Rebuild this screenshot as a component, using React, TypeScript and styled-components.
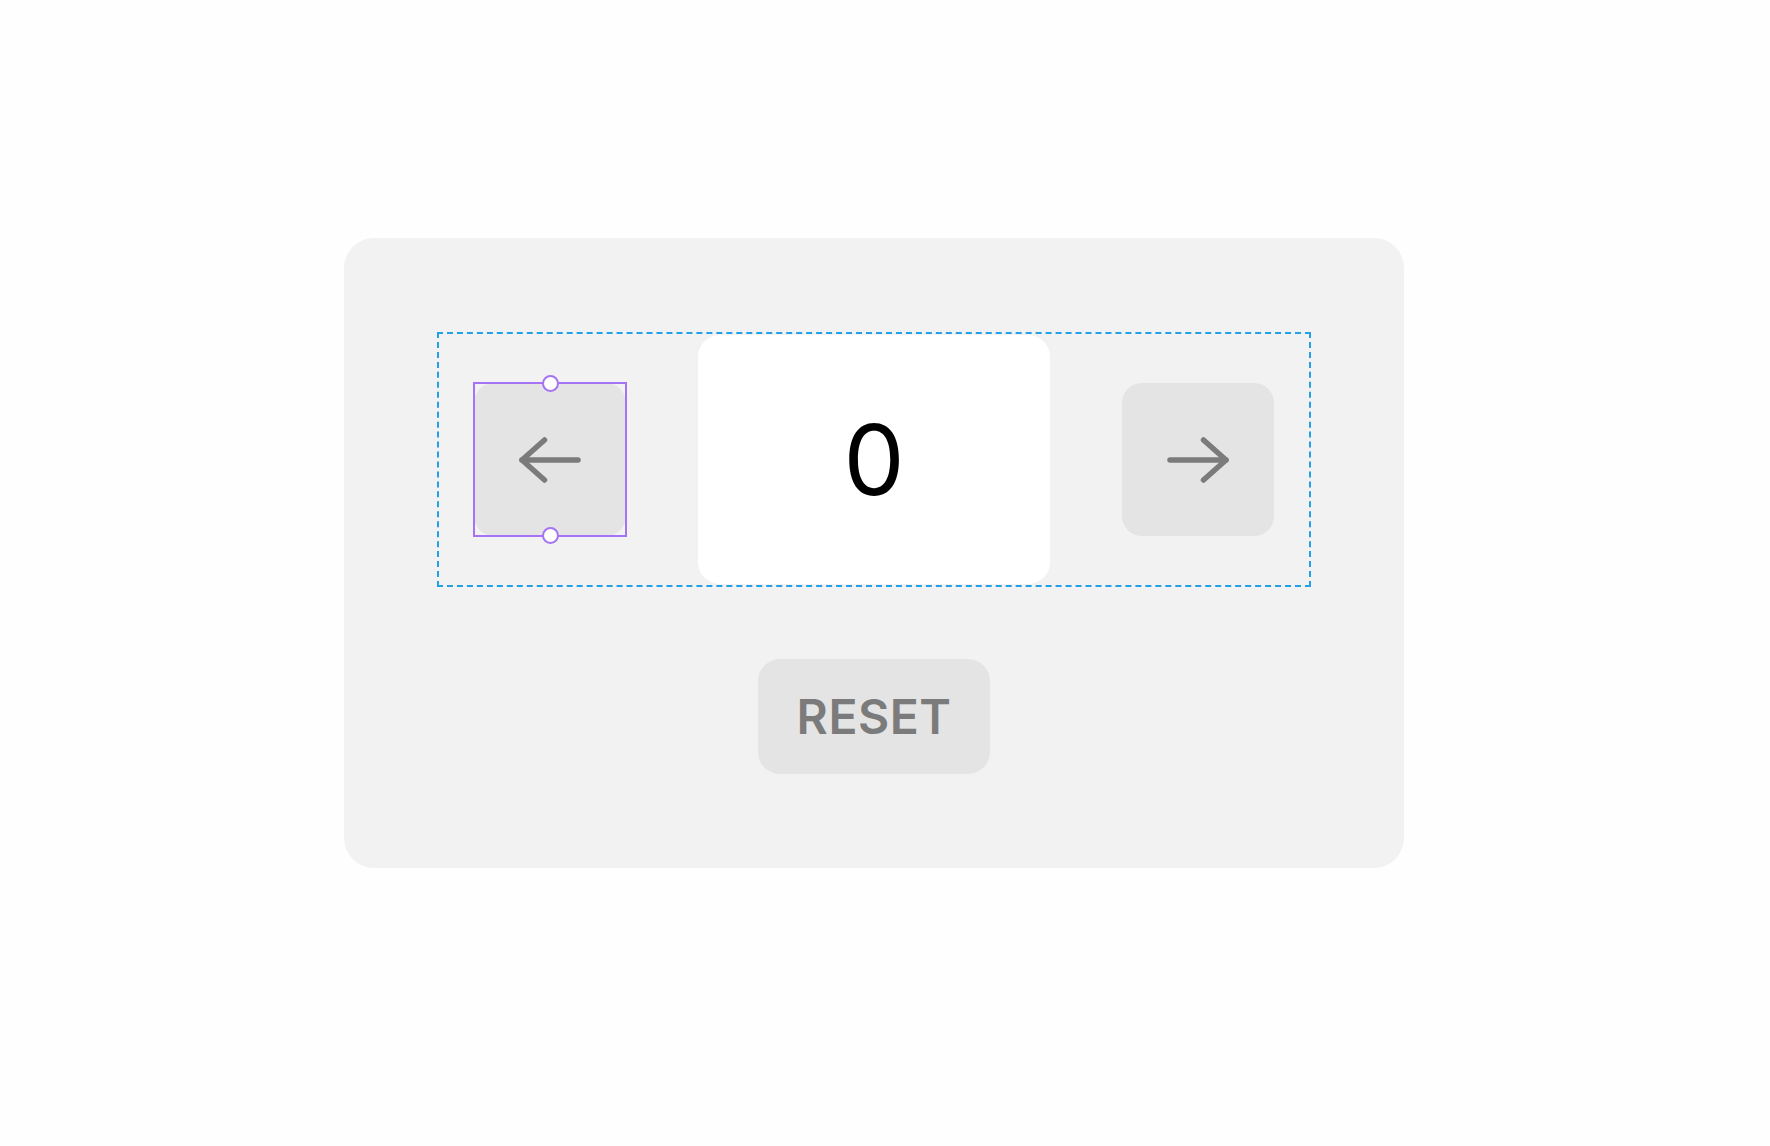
import React, { useState } from "react";
import styled, { createGlobalStyle } from "styled-components";

const GlobalStyle = createGlobalStyle`
  html, body {
    margin: 0;
    padding: 0;
    background: #fefefe;
    font-family: Inter, "Noto Sans", sans-serif;
  }
`;

const Page = styled.div`
  padding: 238px 0 0 344px;
  min-height: 100vh;
  box-sizing: border-box;
`;

const Card = styled.div`
  width: 1060px;
  height: 630px;
  box-sizing: border-box;
  padding: 94px 93px;
  background: #f2f2f2;
  border-radius: 30px;
  display: flex;
  flex-direction: column;
  align-items: center;
  gap: 72px;
`;

const Stepper = styled.div`
  display: flex;
  align-items: center;
  gap: 72px;
  height: 255px;
  box-sizing: border-box;
  padding: 0 35px;
  border: 2px dashed #23a0e6;
`;

const Selected = styled.div`
  position: relative;
  display: flex;
`;

const Outline = styled.div`
  position: absolute;
  inset: -1px;
  border: 2px solid #a474f2;
  pointer-events: none;
`;

const Handle = styled.span<{ $edge: "top" | "bottom" }>`
  position: absolute;
  left: 50%;
  ${(p) => (p.$edge === "top" ? "top: -9px;" : "bottom: -9px;")}
  width: 13px;
  height: 13px;
  margin-left: -8.5px;
  border-radius: 50%;
  background: #fff;
  border: 2px solid #a474f2;
`;

const ArrowButton = styled.button`
  width: 152px;
  height: 153px;
  border: none;
  border-radius: 20px;
  background: #e4e4e4;
  display: flex;
  align-items: center;
  justify-content: center;
  padding: 0;
  cursor: pointer;
  color: #7b7b7b;
`;

const Display = styled.div`
  width: 352px;
  height: 249px;
  background: #fff;
  border-radius: 22px;
  display: flex;
  align-items: center;
  justify-content: center;
  font-size: 97px;
  font-weight: 400;
  color: #000;
  line-height: 1;
`;

const ResetButton = styled.button`
  width: 232px;
  height: 115px;
  border: none;
  border-radius: 22px;
  background: #e4e4e4;
  color: #7b7b7b;
  font-family: Inter, "Noto Sans", sans-serif;
  font-size: 48px;
  font-weight: 600;
  letter-spacing: 0.5px;
  cursor: pointer;
  padding: 0;
`;

const Arrow: React.FC<{ dir: "left" | "right" }> = ({ dir }) => (
  <svg
    width="62"
    height="46"
    viewBox="0 0 62 46"
    fill="none"
    stroke="currentColor"
    strokeWidth="5.5"
    strokeLinecap="round"
    strokeLinejoin="round"
    style={{ transform: dir === "right" ? "scaleX(-1)" : undefined }}
  >
    <path d="M3 23H59" />
    <path d="M25.5 3L3 23L25.5 43" />
  </svg>
);

export default function App() {
  const [count, setCount] = useState(0);
  return (
    <>
      <GlobalStyle />
      <Page>
        <Card>
          <Stepper>
            <Selected>
              <ArrowButton onClick={() => setCount(count - 1)}>
                <Arrow dir="left" />
              </ArrowButton>
              <Outline>
                <Handle $edge="top" />
                <Handle $edge="bottom" />
              </Outline>
            </Selected>
            <Display>{count}</Display>
            <ArrowButton onClick={() => setCount(count + 1)}>
              <Arrow dir="right" />
            </ArrowButton>
          </Stepper>
          <ResetButton onClick={() => setCount(0)}>RESET</ResetButton>
        </Card>
      </Page>
    </>
  );
}
